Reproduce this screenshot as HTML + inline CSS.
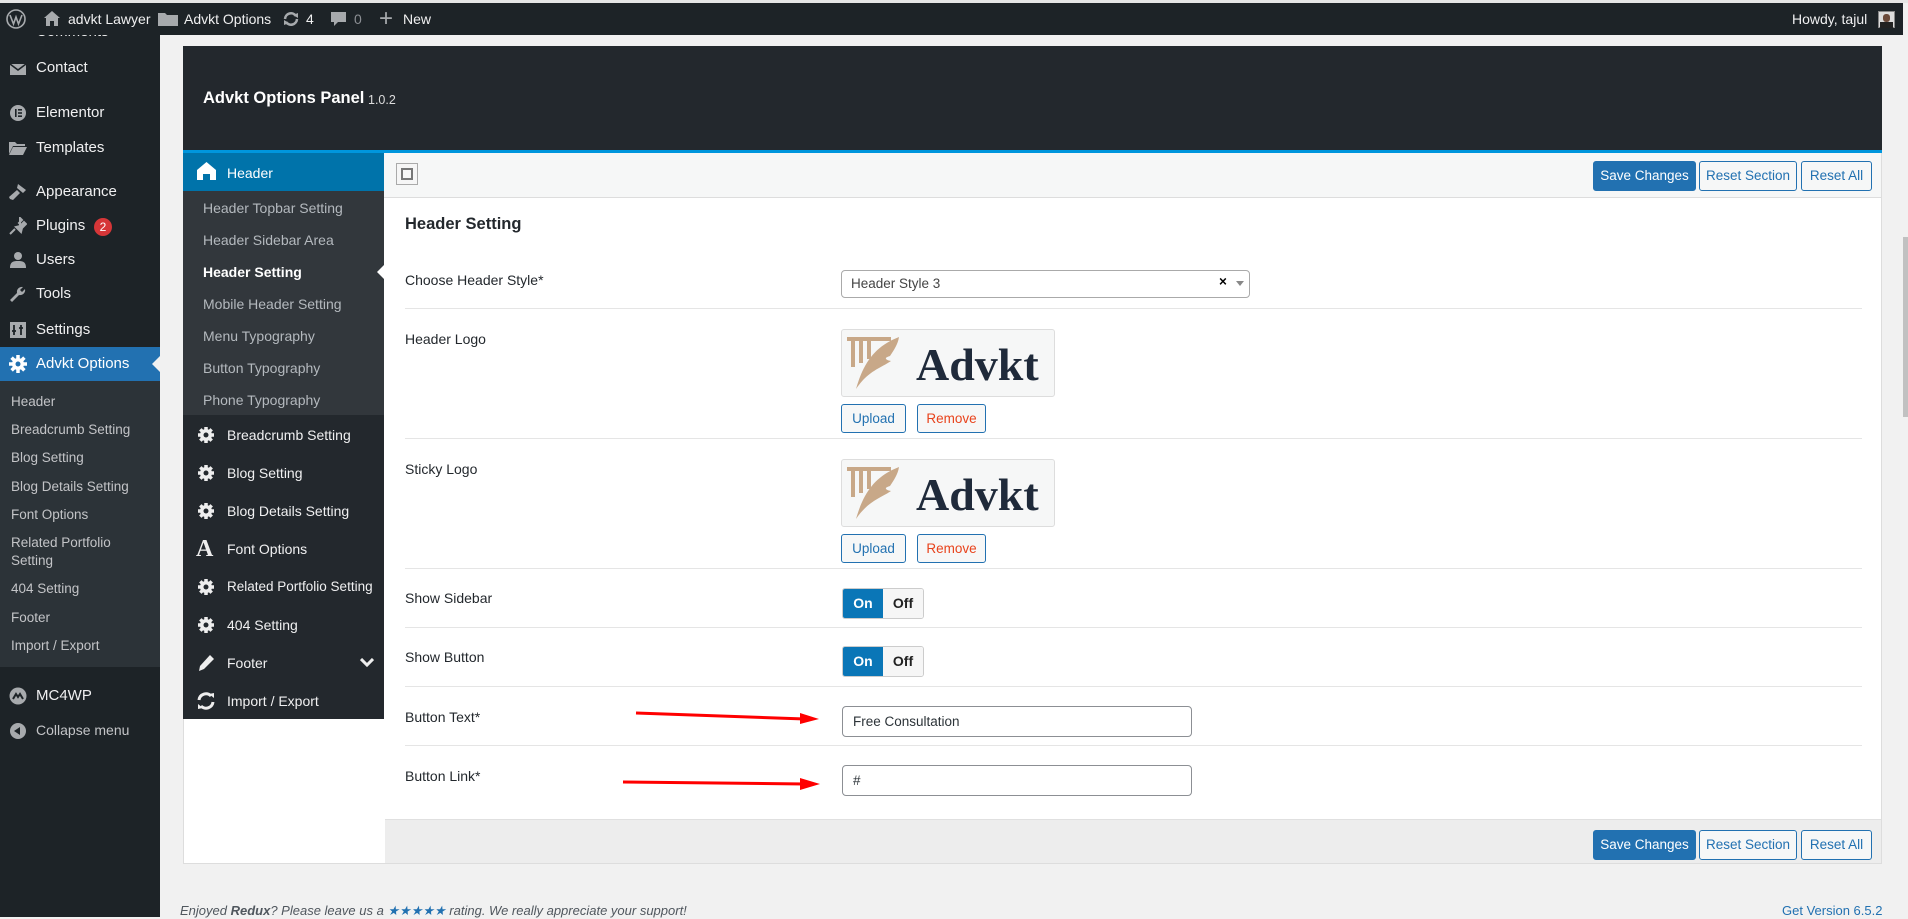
<!DOCTYPE html>
<html><head><meta charset="utf-8"><style>
*{box-sizing:border-box;margin:0;padding:0}
body{width:1908px;height:917px;overflow:hidden;background:#f1f1f1;font-family:"Liberation Sans",sans-serif;position:relative;color:#23282d}
.a{position:absolute;white-space:nowrap}
#bar{left:0;top:3px;width:1903px;height:32px;background:#1d2327;color:#f0f0f1;font-size:14px;z-index:10}
#side{left:0;top:35px;width:160px;height:882px;background:#1d2327;color:#f0f0f1;font-size:15px}
.ico{position:absolute;width:18px;height:18px;left:9px}
.sub{color:#c3c4c7;font-size:13.5px;left:11px}
#panel{left:183px;top:46px;width:1699px;height:818px;background:#fff;border:1px solid #ddd}
.rs{color:#b4b9be;font-size:14px;left:203px}
.rm{color:#f0f0f1;font-size:14px;left:227px}
.lbl{left:405px;font-size:14px;color:#23282d}
.sep{left:405px;width:1457px;height:1px;background:#e5e5e5}
.btnb{border:1px solid #2271b1;border-radius:3px;color:#2271b1;background:#f6f7f7;font-size:13.5px;text-align:center}
.btnp{border:1px solid #2271b1;border-radius:3px;color:#fff;background:#2271b1;font-size:13.5px;text-align:center}
.logo{width:214px;height:68px;background:#f6f7f7;border:1px solid #ddd;border-radius:3px;overflow:hidden}
.logo span{position:absolute;left:74px;top:8px;font-family:"Liberation Serif",serif;font-weight:bold;font-size:46px;color:#1f2a3a}
.tg{width:82px;height:31px;border:1px solid #ccc;border-radius:3px;overflow:hidden;font-weight:bold;font-size:14px}
.tg b{position:absolute;top:0;height:29px;line-height:29px;text-align:center;width:40px}
.inp{width:350px;height:31px;border:1px solid #8c8f94;border-radius:4px;font-size:13.5px;padding:7px 10px;color:#2c3338}
</style></head><body>
<div class="a" style="left:0;top:0;width:1908px;height:3px;background:#e5e5e5"></div>
<div class="a" id="bar">
 <svg class="a" style="left:6px;top:6px" width="20" height="20" viewBox="0 0 20 20"><circle cx="10" cy="10" r="9" fill="none" stroke="#a7aaad" stroke-width="1.6"/><path d="M4 6l3.5 9 2.5-7 2.5 7 3.5-9" fill="none" stroke="#a7aaad" stroke-width="1.6"/></svg>
 <svg class="a" style="left:44px;top:8px" width="16" height="15" viewBox="0 0 16 15"><path d="M8 0L0 7h2v8h4v-5h4v5h4V7h2z" fill="#a7aaad"/></svg>
 <span class="a" style="left:68px;top:8px">advkt Lawyer</span>
 <svg class="a" style="left:158px;top:9px" width="20" height="14" viewBox="0 0 20 14"><path d="M0 1h7l2 2h11v11H0z" fill="#a7aaad"/></svg>
 <span class="a" style="left:184px;top:8px">Advkt Options</span>
 <svg class="a" style="left:282px;top:8px" width="18" height="16" viewBox="0 0 18 16"><path d="M3 8a6 6 0 0 1 11-3M15 8a6 6 0 0 1-11 3" fill="none" stroke="#a7aaad" stroke-width="2.5"/><path d="M11 4l5-2v5zM7 12l-5 2V9z" fill="#a7aaad"/></svg>
 <span class="a" style="left:306px;top:8px">4</span>
 <svg class="a" style="left:331px;top:9px" width="15" height="15" viewBox="0 0 15 15"><path d="M0 0h15v10H7l-4 4v-4H0z" fill="#a7aaad"/></svg>
 <span class="a" style="left:354px;top:8px;color:#8c8f94">0</span>
 <span class="a" style="left:379px;top:2px;font-size:24px;color:#a7aaad">+</span>
 <span class="a" style="left:403px;top:8px">New</span>
 <span class="a" style="left:1792px;top:8px">Howdy, tajul</span>
 <div class="a" style="left:1878px;top:8px;width:17px;height:17px;background:#ddd;border:1px solid #888"><div class="a" style="left:4px;top:2px;width:7px;height:8px;background:#6b4a3a;border-radius:3px"></div><div class="a" style="left:1px;top:10px;width:13px;height:6px;background:#222"></div></div>
</div>
<div class="a" id="side">
 <span class="a" style="left:36px;top:-12px">Comments</span>
 <svg class="ico" style="top:25px" viewBox="0 0 18 18"><rect x="1" y="4" width="16" height="11" fill="#a7aaad"/><path d="M1 4l8 6 8-6" fill="none" stroke="#1d2327" stroke-width="1.5"/></svg>
 <span class="a" style="left:36px;top:24px">Contact</span>
 <svg class="ico" style="top:69px" viewBox="0 0 18 18"><circle cx="9" cy="9" r="8" fill="#a7aaad"/><rect x="6" y="5" width="1.6" height="8" fill="#1d2327"/><rect x="9" y="5" width="4" height="1.6" fill="#1d2327"/><rect x="9" y="8.2" width="4" height="1.6" fill="#1d2327"/><rect x="9" y="11.4" width="4" height="1.6" fill="#1d2327"/></svg>
 <span class="a" style="left:36px;top:69px">Elementor</span>
 <svg class="ico" style="top:104px" viewBox="0 0 18 18"><path d="M0 3h6l2 2h8v2H4l-4 8zM4 8h14l-4 8H0z" fill="#a7aaad"/></svg>
 <span class="a" style="left:36px;top:104px">Templates</span>
 <svg class="ico" style="top:148px" viewBox="0 0 18 18"><path d="M9 1l8 6-3 3-6-5zM8 7l3 3-7 7-3-1-1-2z" fill="#a7aaad"/></svg>
 <span class="a" style="left:36px;top:148px">Appearance</span>
 <svg class="ico" style="top:182px" viewBox="0 0 18 18"><path d="M11 1l2 2-3 3 2 2 3-3 2 2-4 4-1 4-5-5 4-1zM6 12l-5 5" fill="#a7aaad" stroke="#a7aaad" stroke-width="2"/></svg>
 <span class="a" style="left:36px;top:182px">Plugins</span>
 <div class="a" style="left:94px;top:183px;width:18px;height:18px;border-radius:9px;background:#d63638;color:#fff;font-size:12px;text-align:center;line-height:18px">2</div>
 <svg class="ico" style="top:216px" viewBox="0 0 18 18"><circle cx="9" cy="5" r="4" fill="#a7aaad"/><path d="M1 17c0-6 3-7 8-7s8 1 8 7z" fill="#a7aaad"/></svg>
 <span class="a" style="left:36px;top:216px">Users</span>
 <svg class="ico" style="top:250px" viewBox="0 0 18 18"><path d="M16 4l-3 3-2-2 3-3a5 5 0 0 0-6 6l-7 7 2 2 7-7a5 5 0 0 0 6-6z" fill="#a7aaad"/></svg>
 <span class="a" style="left:36px;top:250px">Tools</span>
 <svg class="ico" style="top:286px" viewBox="0 0 18 18"><rect x="1" y="1" width="16" height="16" fill="#a7aaad"/><path d="M5 4v10M12 4v10M3 10h4M10 7h4" stroke="#1d2327" stroke-width="1.8"/></svg>
 <span class="a" style="left:36px;top:286px">Settings</span>
 <div class="a" style="left:0;top:312px;width:160px;height:34px;background:#2271b1"></div>
 <div class="a" style="left:152px;top:321px;width:0;height:0;border-top:8px solid transparent;border-bottom:8px solid transparent;border-right:8px solid #f1f1f1"></div>
 <svg class="ico" style="top:320px" viewBox="0 0 18 18"><circle cx="9" cy="9" r="6" fill="#fff"/><g stroke="#fff" stroke-width="3.5"><path d="M9 0v18M0 9h18M2.6 2.6l12.8 12.8M15.4 2.6L2.6 15.4"/></g><circle cx="9" cy="9" r="2.5" fill="#2271b1"/></svg>
 <span class="a" style="left:36px;top:320px;color:#fff">Advkt Options</span>
 <div class="a" style="left:0;top:346px;width:160px;height:286px;background:#2c3338"></div>
 <span class="a sub" style="top:359px">Header</span>
 <span class="a sub" style="top:387px">Breadcrumb Setting</span>
 <span class="a sub" style="top:415px">Blog Setting</span>
 <span class="a sub" style="top:444px">Blog Details Setting</span>
 <span class="a sub" style="top:472px">Font Options</span>
 <span class="a sub" style="top:500px">Related Portfolio</span>
 <span class="a sub" style="top:518px">Setting</span>
 <span class="a sub" style="top:546px">404 Setting</span>
 <span class="a sub" style="top:575px">Footer</span>
 <span class="a sub" style="top:603px">Import / Export</span>
 <svg class="ico" style="top:652px" viewBox="0 0 18 18"><circle cx="9" cy="9" r="8.5" fill="#a7aaad"/><path d="M4 12l3-5 2 3 2-3 3 5" fill="none" stroke="#1d2327" stroke-width="2"/></svg>
 <span class="a" style="left:36px;top:652px">MC4WP</span>
 <svg class="ico" style="top:687px" viewBox="0 0 18 18"><circle cx="9" cy="9" r="8" fill="#a7aaad"/><path d="M11 5v8L5 9z" fill="#1d2327"/></svg>
 <span class="a" style="left:36px;top:687px;color:#c3c4c7;font-size:14px">Collapse menu</span>
</div>
<div class="a" id="panel"></div>
<div class="a" style="left:183px;top:46px;width:1699px;height:104px;background:#23282d"></div>
<span class="a" style="left:203px;top:89px;color:#fff;font-size:16.5px;font-weight:bold">Advkt Options Panel</span>
<span class="a" style="left:368px;top:93px;color:#ddd;font-size:12.5px">1.0.2</span>
<div class="a" style="left:183px;top:150px;width:1699px;height:3px;background:#0096dd"></div>
<div class="a" style="left:183px;top:153px;width:201px;height:566px;background:#23282d"></div>
<div class="a" style="left:183px;top:153px;width:201px;height:38px;background:#0073aa"></div>
<svg class="a" style="left:197px;top:162px" width="19" height="18" viewBox="0 0 19 18"><path d="M9.5 0L0 8v10h6v-6h7v6h6V8z" fill="#fff"/></svg>
<span class="a" style="left:227px;top:165px;color:#fff;font-size:14px">Header</span>
<div class="a" style="left:183px;top:191px;width:201px;height:224px;background:#32373c"></div>
<span class="a rs" style="top:200px">Header Topbar Setting</span>
<span class="a rs" style="top:232px">Header Sidebar Area</span>
<span class="a rs" style="top:264px;color:#fff;font-weight:bold">Header Setting</span>
<div class="a" style="left:377px;top:264px;width:0;height:0;border-top:8px solid transparent;border-bottom:8px solid transparent;border-right:8px solid #fff"></div>
<span class="a rs" style="top:296px">Mobile Header Setting</span>
<span class="a rs" style="top:328px">Menu Typography</span>
<span class="a rs" style="top:360px">Button Typography</span>
<span class="a rs" style="top:392px">Phone Typography</span>
<svg width="0" height="0" style="position:absolute"><defs><g id="gear"><circle cx="9" cy="9" r="6" fill="#eee"/><g stroke="#eee" stroke-width="3.5"><path d="M9 1v16M1 9h16M3.3 3.3l11.4 11.4M14.7 3.3L3.3 14.7"/></g><circle cx="9" cy="9" r="2.5" fill="#23282d"/></g></defs></svg>
<svg class="a" style="left:197px;top:426px" width="18" height="18"><use href="#gear"/></svg><span class="a rm" style="top:427px">Breadcrumb Setting</span>
<svg class="a" style="left:197px;top:464px" width="18" height="18"><use href="#gear"/></svg><span class="a rm" style="top:465px">Blog Setting</span>
<svg class="a" style="left:197px;top:502px" width="18" height="18"><use href="#gear"/></svg><span class="a rm" style="top:503px">Blog Details Setting</span>
<span class="a" style="left:196px;top:536px;color:#eee;font-family:'Liberation Serif',serif;font-weight:bold;font-size:24px">A</span><span class="a rm" style="top:541px">Font Options</span>
<svg class="a" style="left:197px;top:578px" width="18" height="18"><use href="#gear"/></svg><span class="a rm" style="top:579px;font-size:13.5px">Related Portfolio Setting</span>
<svg class="a" style="left:197px;top:616px" width="18" height="18"><use href="#gear"/></svg><span class="a rm" style="top:617px">404 Setting</span>
<svg class="a" style="left:197px;top:654px" width="18" height="18" viewBox="0 0 18 18"><path d="M13 1l4 4-10 10-5 2 1-5z" fill="#eee"/></svg><span class="a rm" style="top:655px">Footer</span>
<svg class="a" style="left:360px;top:658px" width="14" height="10" viewBox="0 0 14 10"><path d="M1 1l6 6 6-6" fill="none" stroke="#eee" stroke-width="3"/></svg>
<svg class="a" style="left:197px;top:692px" width="18" height="18" viewBox="0 0 18 18"><path d="M2 8a7 7 0 0 1 12-4M16 10a7 7 0 0 1-12 4" fill="none" stroke="#eee" stroke-width="3"/><path d="M12 2l5-1v5zM6 16l-5 1v-5z" fill="#eee"/></svg><span class="a rm" style="top:693px">Import / Export</span>
<div class="a" style="left:384px;top:153px;width:1497px;height:45px;background:#f6f7f7;border-bottom:1px solid #ddd"></div>
<div class="a" style="left:396px;top:163px;width:22px;height:22px;border:1px solid #aaa;background:#f6f6f6"><div class="a" style="left:4px;top:4px;width:12px;height:12px;border:2px solid #777"></div></div>
<div class="a btnp" style="left:1593px;top:161px;width:103px;height:30px;line-height:28px">Save Changes</div>
<div class="a btnb" style="left:1699px;top:161px;width:98px;height:30px;line-height:28px">Reset Section</div>
<div class="a btnb" style="left:1801px;top:161px;width:71px;height:30px;line-height:28px">Reset All</div>
<span class="a" style="left:405px;top:215px;font-size:16.5px;font-weight:bold">Header Setting</span>
<span class="a lbl" style="top:272px">Choose Header Style*</span>
<div class="a" style="left:841px;top:270px;width:409px;height:28px;border:1px solid #aaa;border-radius:4px;font-size:13.5px;color:#444;padding:5px 9px">Header Style 3<span class="a" style="left:377px;top:3px;font-weight:bold;color:#000">×</span><div class="a" style="left:394px;top:10px;border-left:4px solid transparent;border-right:4px solid transparent;border-top:5px solid #888"></div></div>
<div class="a sep" style="top:308px"></div>
<span class="a lbl" style="top:331px">Header Logo</span>
<div class="a logo" style="left:841px;top:329px"><svg class="a" style="left:4px;top:6px" width="56" height="56" viewBox="0 0 56 56"><rect x="1" y="1" width="44" height="4" fill="#c8a888"/><rect x="5" y="5" width="4" height="26" fill="#c8a888"/><rect x="13" y="5" width="4" height="22" fill="#c8a888"/><rect x="21" y="5" width="4" height="18" fill="#c8a888"/><path d="M53 1C30 10 18 25 10 53 22 35 35 32 45 25 40 24 37 22 44 20 48 14 52 8 53 1z" fill="#c8a888"/></svg><span>Advkt</span></div>
<div class="a btnb" style="left:841px;top:404px;width:65px;height:29px;line-height:27px">Upload</div>
<div class="a btnb" style="left:917px;top:404px;width:69px;height:29px;line-height:27px;color:#e8431c">Remove</div>
<div class="a sep" style="top:438px"></div>
<span class="a lbl" style="top:461px">Sticky Logo</span>
<div class="a logo" style="left:841px;top:459px"><svg class="a" style="left:4px;top:6px" width="56" height="56" viewBox="0 0 56 56"><rect x="1" y="1" width="44" height="4" fill="#c8a888"/><rect x="5" y="5" width="4" height="26" fill="#c8a888"/><rect x="13" y="5" width="4" height="22" fill="#c8a888"/><rect x="21" y="5" width="4" height="18" fill="#c8a888"/><path d="M53 1C30 10 18 25 10 53 22 35 35 32 45 25 40 24 37 22 44 20 48 14 52 8 53 1z" fill="#c8a888"/></svg><span>Advkt</span></div>
<div class="a btnb" style="left:841px;top:534px;width:65px;height:29px;line-height:27px">Upload</div>
<div class="a btnb" style="left:917px;top:534px;width:69px;height:29px;line-height:27px;color:#e8431c">Remove</div>
<div class="a sep" style="top:568px"></div>
<span class="a lbl" style="top:590px">Show Sidebar</span>
<div class="a tg" style="left:842px;top:588px"><b style="left:0;background:#0a76b7;color:#fff">On</b><b style="left:40px;background:#f6f6f6;color:#222">Off</b></div>
<div class="a sep" style="top:627px"></div>
<span class="a lbl" style="top:649px">Show Button</span>
<div class="a tg" style="left:842px;top:646px"><b style="left:0;background:#0a76b7;color:#fff">On</b><b style="left:40px;background:#f6f6f6;color:#222">Off</b></div>
<div class="a sep" style="top:686px"></div>
<span class="a lbl" style="top:709px">Button Text*</span>
<div class="a inp" style="left:842px;top:706px">Free Consultation</div>
<div class="a sep" style="top:745px"></div>
<span class="a lbl" style="top:768px">Button Link*</span>
<div class="a inp" style="left:842px;top:765px">#</div>
<svg class="a" style="left:600px;top:700px" width="230" height="100"><line x1="36" y1="13" x2="205" y2="19" stroke="#f00" stroke-width="3"/><path d="M200 13L219 19 200 24z" fill="#f00"/><line x1="23" y1="82" x2="205" y2="84" stroke="#f00" stroke-width="3"/><path d="M200 78L220 84 200 90z" fill="#f00"/></svg>
<div class="a" style="left:385px;top:819px;width:1496px;height:44px;background:#ededed;border-top:1px solid #e0e0e0"></div>
<div class="a btnp" style="left:1593px;top:830px;width:103px;height:30px;line-height:28px">Save Changes</div>
<div class="a btnb" style="left:1699px;top:830px;width:98px;height:30px;line-height:28px">Reset Section</div>
<div class="a btnb" style="left:1801px;top:830px;width:71px;height:30px;line-height:28px">Reset All</div>
<span class="a" style="left:180px;top:903px;font-size:13px;font-style:italic;color:#50575e">Enjoyed <b>Redux</b>? Please leave us a <span style="color:#2271b1">★★★★★</span> rating. We really appreciate your support!</span>
<span class="a" style="left:1782px;top:903px;font-size:13px;color:#2271b1">Get Version 6.5.2</span>
<div class="a" style="left:1903px;top:237px;width:5px;height:180px;background:#c1c1c1"></div>
</body></html>
